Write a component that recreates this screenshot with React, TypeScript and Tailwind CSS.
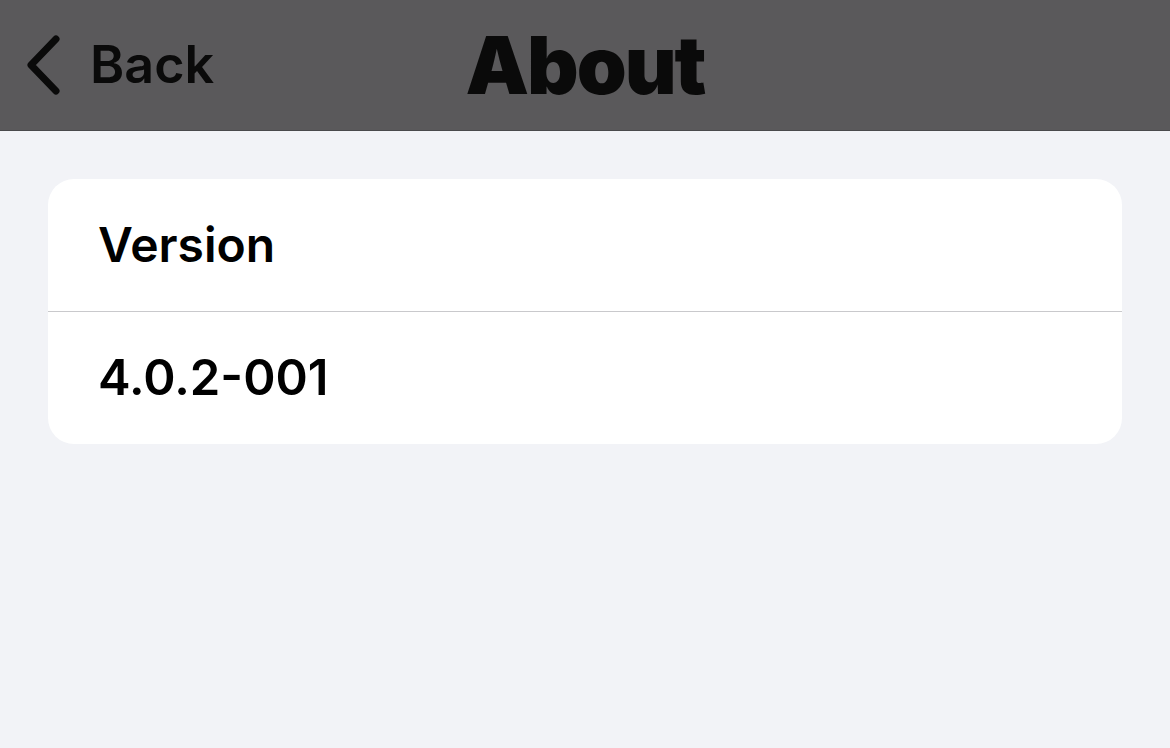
export default function App() {
  return (
    <div className="min-h-screen w-full bg-[#f2f3f7] font-['Inter',sans-serif]">
      <header className="relative flex h-[131px] items-center border-b border-[#4a4a4c] bg-[#5a595b]">
        <button className="ml-[26px] flex items-center gap-[28px] text-[#0a0a0a]">
          <svg width="36" height="60" viewBox="0 0 36 60" fill="none">
            <path
              d="M30 4 L5 30 L30 56"
              stroke="#0a0a0a"
              strokeWidth="7"
              strokeLinecap="round"
              strokeLinejoin="round"
            />
          </svg>
          <span className="text-[52px] font-semibold leading-none">Back</span>
        </button>
        <h1 className="absolute left-1/2 -translate-x-1/2 text-[80px] font-black leading-none tracking-[-2px] text-[#0a0a0a]">
          About
        </h1>
      </header>

      <main className="px-12 pt-12">
        <div className="overflow-hidden rounded-[26px] bg-white">
          <div className="flex h-[132px] items-center px-[50px]">
            <span className="text-[48px] font-semibold text-black">Version</span>
          </div>
          <div className="h-px bg-[#c9c9cc]" />
          <div className="flex h-[132px] items-center px-[50px]">
            <span className="text-[49px] font-semibold text-black">4.0.2-001</span>
          </div>
        </div>
      </main>
    </div>
  );
}
